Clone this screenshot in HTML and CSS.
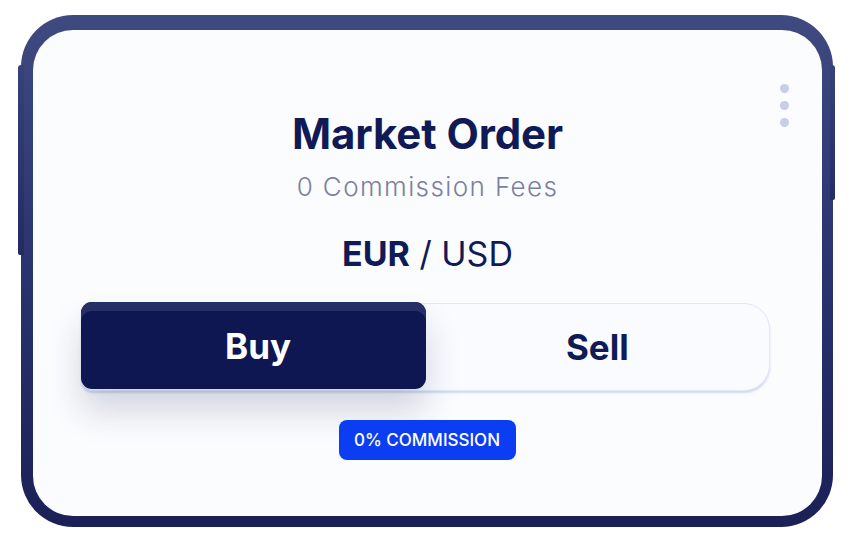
FILE: index.html
```html
<!DOCTYPE html>
<html lang="en">
<head>
<meta charset="utf-8">
<title>Market Order</title>
<link rel="stylesheet" href="styles.css">
</head>
<body>
<div class="device">
  <div class="screen">
    <div class="kebab"><span></span><span></span><span></span></div>
    <h1 class="title">Market Order</h1>
    <p class="subtitle">0 Commission Fees</p>
    <p class="pair"><strong>EUR</strong> / USD</p>
    <div class="segment">
      <button class="seg-btn seg-buy">Buy</button>
      <button class="seg-btn seg-sell">Sell</button>
    </div>
    <span class="badge">0% COMMISSION</span>
  </div>
</div>
</body>
</html>
```
FILE: styles.css
```css
html, body {
  margin: 0;
  padding: 0;
  background: #ffffff;
}
body {
  font-family: Inter, "Noto Sans", sans-serif;
  color: #101a56;
}
.device {
  position: relative;
  box-sizing: border-box;
  width: 812px;
  height: 512px;
  margin: 15px 0 0 21px;
  padding: 15px 11px 11px 12px;
  border-radius: 52px;
  background: linear-gradient(180deg, #3f4a80 0%, #2c3570 45%, #1b2157 100%);
}
.device::before {
  content: "";
  position: absolute;
  left: -3px;
  top: 50px;
  width: 6px;
  height: 190px;
  border-radius: 3px 0 0 2px;
  background: linear-gradient(180deg, #37427a, #222a62);
}
.device::after {
  content: "";
  position: absolute;
  right: -2px;
  top: 50px;
  width: 5px;
  height: 135px;
  border-radius: 0 3px 2px 0;
  background: linear-gradient(180deg, #37427a, #252d66);
}
.screen {
  position: relative;
  box-sizing: border-box;
  height: 100%;
  border-radius: 40px;
  background: #fbfcfe;
  display: flex;
  flex-direction: column;
  align-items: center;
  padding-top: 79px;
}
.kebab {
  position: absolute;
  top: 54px;
  right: 33px;
  display: flex;
  flex-direction: column;
  gap: 8px;
}
.kebab span {
  display: block;
  width: 9px;
  height: 9px;
  border-radius: 50%;
  background: #c6cee9;
}
.title {
  margin: 0;
  font-size: 42px;
  line-height: 50px;
  font-weight: 700;
  letter-spacing: -0.1px;
  color: #101a56;
}
.subtitle {
  margin: 12px 0 0;
  font-size: 26px;
  line-height: 32px;
  font-weight: 300;
  letter-spacing: 1.4px;
  color: #7b809f;
}
.pair {
  margin: 31px 0 0;
  font-size: 34px;
  line-height: 40px;
  font-weight: 400;
  color: #101a56;
}
.pair strong {
  font-weight: 700;
}
.segment {
  margin-top: 29px;
  margin-left: -4px;
  width: 689px;
  height: 88px;
  box-sizing: border-box;
  display: flex;
  border: 1.5px solid #e2e8f6;
  border-radius: 12px 26px 26px 12px;
  background: #f9fbff;
  box-shadow: 0 2px 2px rgba(170, 188, 228, 0.55);
}
.seg-btn {
  font-family: inherit;
  font-size: 35px;
  font-weight: 700;
  border: 0;
  padding: 0;
  cursor: pointer;
}
.seg-buy {
  width: 345px;
  height: 87px;
  margin: -2px 0 0 -1.5px;
  padding-left: 10px;
  border-radius: 11px;
  color: #ffffff;
  background: #0e1752;
  box-shadow: inset 0 9px 0 #272f67, 0 22px 34px rgba(30, 40, 90, 0.18);
}
.seg-sell {
  flex: 1;
  background: transparent;
  color: #101a56;
}
.badge {
  margin-top: 29px;
  margin-left: -1px;
  box-sizing: border-box;
  width: 177px;
  height: 40px;
  display: flex;
  align-items: center;
  justify-content: center;
  border-radius: 8px;
  background: #0b3ef2;
  color: #ffffff;
  font-size: 17px;
  font-weight: 500;
}
```
